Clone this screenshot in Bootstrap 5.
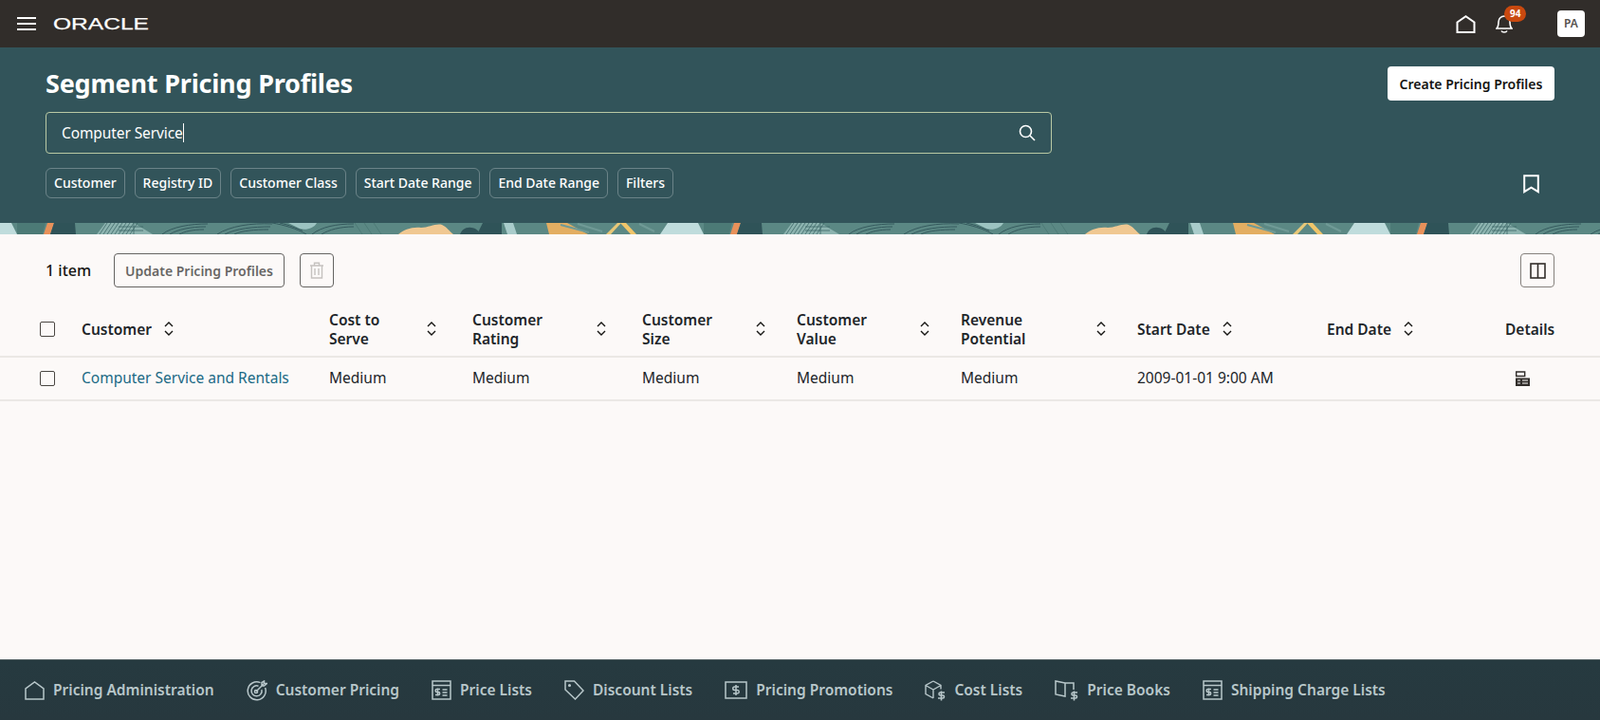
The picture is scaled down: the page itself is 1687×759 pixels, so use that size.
<!DOCTYPE html>
<html lang="en">

<head>
    <meta charset="UTF-8">
    <meta name="viewport" content="width=device-width, initial-scale=1.0">
    <title>Segment Pricing Profiles</title>
    <link href="https://cdn.jsdelivr.net/npm/bootstrap@5.3.0/dist/css/bootstrap.min.css" rel="stylesheet">
    <style>
        body {
            font-family: "Noto Sans", "Liberation Sans", sans-serif;
            background: #fcf9f8;
            color: #161513;
            font-size: 16px;
        }

        .page-wrap {
            height: 759px;
            overflow: hidden;
        }

        /* top bar */
        .top-strip {
            height: 50px;
            background: #312d2a;
            padding: 0 16px 0 18px;
        }

        .logo-svg {
            margin-left: 18px;
        }

        .bell-wrap {
            margin-left: 21px;
            margin-right: 47px;
            height: 20px;
        }

        .bell-count {
            top: -9px;
            left: 9px;
            background: #c9490f;
            font-size: 10px;
            font-weight: 700;
            padding: 3px 6px;
            line-height: 11px;
        }

        .user-box {
            width: 29px;
            height: 28px;
            background: #fff;
            border-radius: 4px;
            color: #55514d;
            font-size: 12px;
            font-weight: 600;
        }

        /* teal header */
        .hero {
            height: 185px;
            background: #32545a;
            color: #fff;
            padding: 18px 48px 0 48px;
        }

        .hero h1 {
            font-size: 27px;
            font-weight: 700;
            line-height: 40px;
            letter-spacing: -0.2px;
            margin: 0;
        }

        .btn-create {
            background: #fff;
            color: #161513;
            font-size: 14px;
            font-weight: 600;
            height: 36px;
            width: 176px;
            padding: 0;
            border-radius: 4px;
            border: 0;
        }

        .search-box {
            width: 1061px;
            height: 44px;
            margin-top: 10px;
            padding: 0 16px;
            border: 1px solid #b9c9a4;
            border-radius: 4px;
            font-size: 15.5px;
        }

        .caret-line {
            border-right: 1px solid #fff;
            height: 20px;
            line-height: 20px;
            letter-spacing: -0.1px;
        }

        .chip-row {
            margin-top: 15px;
            gap: 10px;
        }

        .filter-chip {
            height: 32px;
            line-height: 30px;
            padding: 0 8px;
            font-size: 14px;
            font-weight: 500;
            color: #fff;
            border: 1px solid rgba(255, 255, 255, 0.28);
            border-radius: 6px;
        }

        .deco-band {
            display: block;
            flex: none;
            height: 12px;
        }

        /* toolbar */
        .tool-row {
            padding: 20px 48px 15px 48px;
        }

        .item-count {
            width: 72px;
            font-weight: 500;
        }

        .btn-off {
            height: 36px;
            padding: 0;
            width: 180px;
            font-size: 14px;
            font-weight: 600;
            color: #a9a5a1;
            border: 1px solid #d8d4d0;
            border-radius: 4px;
            background: transparent;
        }

        .btn-square {
            width: 36px;
            height: 36px;
            padding: 0;
            margin-left: 16px;
            border: 1px solid #d8d4d0;
            border-radius: 4px;
            background: transparent;
        }

        .btn-square.btn-dark-edge {
            border-color: #85817d;
            margin-left: 0;
        }

        /* table */
        .price-table {
            table-layout: fixed;
            width: 1687px;
            margin: 0;
            --bs-table-bg: transparent;
        }

        .price-table th,
        .price-table td {
            padding: 0;
            vertical-align: middle;
            font-size: 15.5px;
            border-bottom: 2px solid #ebe8e5;
        }

        .price-table th {
            height: 58px;
            line-height: 20px;
            font-weight: 600;
        }

        .price-table td {
            height: 46px;
            font-weight: 400;
        }

        .price-table .form-check-input {
            width: 16px;
            height: 16px;
            margin: 0 0 0 42px;
            display: block;
            background-color: transparent;
            border: 1.5px solid #4a4642;
            border-radius: 2px;
        }

        .c-check { width: 86px; }
        .c-cust { width: 261px; }
        .c-cost { width: 151px; }
        .c-rate { width: 179px; }
        .c-size { width: 163px; }
        .c-value { width: 173px; }
        .c-rev { width: 186px; }
        .c-start { width: 200px; }
        .c-end { width: 188px; }
        .c-det { width: 100px; }

        .head-cell {
            gap: 13px;
        }

        .lbl-cost { width: 90px; }
        .lbl-rate { width: 118px; }
        .lbl-size { width: 107px; }
        .lbl-value { width: 117px; }
        .lbl-rev { width: 130px; }

        .row-link {
            color: #1b6a85;
            text-decoration: none;
        }

        .details-icon {
            display: block;
            margin-left: 10px;
        }

        .flex-spacer {
            flex: 1 1 auto;
        }

        /* bottom nav */
        .bottom-nav {
            height: 64px;
            flex: none;
            background: linear-gradient(#263a40, #27383e);
            padding-left: 26px;
            gap: 34px;
            border-top: 1px solid #4c5a5e;
        }

        .bottom-nav a {
            color: #b8c7ca;
            font-size: 15.5px;
            font-weight: 600;
            text-decoration: none;
            gap: 9px;
            white-space: nowrap;
        }
    </style>
</head>

<body>
    <div class="page-wrap d-flex flex-column">

        <!-- top bar -->
        <nav class="top-strip d-flex align-items-center flex-none">
            <svg width="20" height="14" viewBox="0 0 20 14" stroke="#fff" stroke-width="2"><path d="M0 1h20M0 7h20M0 13h20"/></svg>
            <svg class="logo-svg" width="101" height="14" viewBox="0 0 101 14">
                <text x="0" y="13" font-family="Liberation Sans, sans-serif" font-size="17" fill="#fff" stroke="#fff" stroke-width=".25" textLength="101" lengthAdjust="spacingAndGlyphs">ORACLE</text>
            </svg>
            <div class="ms-auto d-flex align-items-center">
                <svg width="21" height="19" viewBox="0 0 21 19" fill="none" stroke="#fff" stroke-width="2"><path d="M1.5 18V7.5L10.5 1.3l9 6.2V18z"/></svg>
                <div class="bell-wrap position-relative">
                    <svg class="d-block" width="18" height="20" viewBox="0 0 18 20" fill="none" stroke="#fff" stroke-width="1.6"><path d="M1 15c2-2 2-4 2-7a6 6 0 0 1 12 0c0 3 0 5 2 7z"/><path d="M6 17.5c1 2 5 2 6 0"/></svg>
                    <span class="badge rounded-pill position-absolute bell-count">94</span>
                </div>
                <div class="user-box d-flex align-items-center justify-content-center">PA</div>
            </div>
        </nav>

        <!-- title and search -->
        <header class="hero flex-none">
            <div class="d-flex justify-content-between align-items-center">
                <h1>Segment Pricing Profiles</h1>
                <button type="button" class="btn btn-create">Create Pricing Profiles</button>
            </div>
            <div class="search-box d-flex align-items-center justify-content-between">
                <span class="caret-line">Computer Service</span>
                <svg width="18" height="18" viewBox="0 0 18 18" fill="none" stroke="#fff" stroke-width="1.6"><circle cx="7.5" cy="7.5" r="6"/><path d="M12 12l5 5"/></svg>
            </div>
            <div class="d-flex align-items-center justify-content-between">
                <div class="chip-row d-flex">
                    <span class="filter-chip">Customer</span>
                    <span class="filter-chip">Registry ID</span>
                    <span class="filter-chip">Customer Class</span>
                    <span class="filter-chip">Start Date Range</span>
                    <span class="filter-chip">End Date Range</span>
                    <span class="filter-chip">Filters</span>
                </div>
                <svg class="me-3 mt-3" width="17" height="20" viewBox="0 0 17 20" fill="none" stroke="#fff" stroke-width="2"><path d="M1.2 1.2h14.6v17l-7.3-4.6-7.3 4.6z"/></svg>
            </div>
        </header>

        <!-- decorative band -->
        <svg class="deco-band" width="1687" height="12" xmlns="http://www.w3.org/2000/svg">
            <defs>
                <pattern id="bandTile" width="724" height="12" patternUnits="userSpaceOnUse" x="-1">
                    <rect width="724" height="12" fill="#5b8884"/>
                    <!-- left pale + orange + dark block -->
                    <path d="M0 0h13l6 12H0z" fill="#bfdcdc"/>
                    <path d="M19 0h30l-3 12H19z" fill="#4c7a76"/>
                    <path d="M51 0h7l-4 12h-7z" fill="#e8915a"/>
                    <path d="M58 0h22l1 12H54z" fill="#2f5358"/>
                    <!-- hatching -->
                    <path d="M103 12l9-12h30l20 12z" fill="#8cb3af"/>
                    <path d="M106 12l8-12M110 12l8-12M114 12l8-12M118 12l8-12M122 12l8-12M126 12l8-12M130 12l8-12M134 12l8-12M138 12l8-12M142 0v12M126 4h26M126 8h26" stroke="#3c6766" stroke-width=".8" fill="none"/>
                    <!-- arcs -->
                    <path d="M172 12c10-8 30-11 48-11M180 12c8-5 22-8 38-8M190 12c6-3 14-5 26-5M230 12c14-9 36-12 58-11M238 12c12-6 30-8 48-8M248 12c8-4 22-5 36-5M288 0c12 2 26 6 36 12M296 0c10 2 18 6 24 8M330 12c10-8 26-11 44-11M340 12c8-5 20-8 34-8" stroke="#2f5358" stroke-width=".9" fill="none"/>
                    <path d="M305 0h30c-3 6-12 8-18 6z" fill="#9cc3c1"/>
                    <path d="M375 0l8 12M385 0l8 12M395 0l8 12" stroke="#4c7a76" stroke-width="1" fill="none"/>
                    <!-- peach blob -->
                    <path d="M421 12c6-5 14-8 24-7 8 0 16-5 22-3 5 2 8 7 12 10z" fill="#f0c892"/>
                    <path d="M486 12c2-5 6-8 12-7 5 0 8 4 10 7z" fill="#2f5358"/>
                    <path d="M514 12l3-12h-7l-6 12z" fill="#2f5358"/>
                    <path d="M514 0h16v12h-16z" fill="#2f5358"/>
                    <path d="M532 0h10l4 12h-10z" fill="#a9cccb"/>
                    <path d="M577 0h22l22 12h-41z" fill="#e3ae62"/>
                    <path d="M640 12l12-12h4l-11 12z" fill="#e8c878"/>
                    <path d="M655 0h6l11 12h-6z" fill="#f0c56a"/>
                    <path d="M697 12l8-12h29l5 12z" fill="#bfdcdc"/>
                    <path d="M592 2l30 8M610 1l26 8M675 1l16 8" stroke="#6f9a96" stroke-width="2" fill="none"/>
                </pattern>
            </defs>
            <rect width="1687" height="12" fill="url(#bandTile)"/>
        </svg>

        <!-- toolbar -->
        <div class="tool-row d-flex align-items-center flex-none">
            <span class="item-count">1 item</span>
            <button type="button" class="btn btn-off" disabled>Update Pricing Profiles</button>
            <button type="button" class="btn btn-square d-flex align-items-center justify-content-center" disabled>
                <svg width="16" height="18" viewBox="0 0 16 18" fill="none" stroke="#a9a5a1" stroke-width="1.4"><path d="M1 4h14M5.5 4V1.2h5V4M2.5 4v13h11V4M6 7v7M10 7v7"/></svg>
            </button>
            <div class="flex-spacer"></div>
            <button type="button" class="btn btn-square btn-dark-edge d-flex align-items-center justify-content-center">
                <svg width="17" height="17" viewBox="0 0 17 17" fill="none" stroke="#312d2a" stroke-width="1.6"><rect x="1" y="1" width="15" height="15"/><path d="M8.5 1v15"/></svg>
            </button>
        </div>

        <!-- results -->
        <table class="table price-table flex-none">
            <colgroup>
                <col class="c-check"><col class="c-cust"><col class="c-cost"><col class="c-rate"><col class="c-size"><col class="c-value"><col class="c-rev"><col class="c-start"><col class="c-end"><col class="c-det">
            </colgroup>
            <thead>
                <tr>
                    <th><input class="form-check-input" type="checkbox"></th>
                    <th><div class="head-cell d-flex align-items-center"><span>Customer</span>
                        <svg width="10" height="15" viewBox="0 0 10 15" fill="none" stroke="#161513" stroke-width="1.4"><path d="M1 5l4-4 4 4M1 10l4 4 4-4"/></svg></div></th>
                    <th><div class="head-cell d-flex align-items-center"><span class="lbl-cost">Cost to<br>Serve</span>
                        <svg width="10" height="15" viewBox="0 0 10 15" fill="none" stroke="#161513" stroke-width="1.4"><path d="M1 5l4-4 4 4M1 10l4 4 4-4"/></svg></div></th>
                    <th><div class="head-cell d-flex align-items-center"><span class="lbl-rate">Customer<br>Rating</span>
                        <svg width="10" height="15" viewBox="0 0 10 15" fill="none" stroke="#161513" stroke-width="1.4"><path d="M1 5l4-4 4 4M1 10l4 4 4-4"/></svg></div></th>
                    <th><div class="head-cell d-flex align-items-center"><span class="lbl-size">Customer<br>Size</span>
                        <svg width="10" height="15" viewBox="0 0 10 15" fill="none" stroke="#161513" stroke-width="1.4"><path d="M1 5l4-4 4 4M1 10l4 4 4-4"/></svg></div></th>
                    <th><div class="head-cell d-flex align-items-center"><span class="lbl-value">Customer<br>Value</span>
                        <svg width="10" height="15" viewBox="0 0 10 15" fill="none" stroke="#161513" stroke-width="1.4"><path d="M1 5l4-4 4 4M1 10l4 4 4-4"/></svg></div></th>
                    <th><div class="head-cell d-flex align-items-center"><span class="lbl-rev">Revenue<br>Potential</span>
                        <svg width="10" height="15" viewBox="0 0 10 15" fill="none" stroke="#161513" stroke-width="1.4"><path d="M1 5l4-4 4 4M1 10l4 4 4-4"/></svg></div></th>
                    <th><div class="head-cell d-flex align-items-center"><span>Start Date</span>
                        <svg width="10" height="15" viewBox="0 0 10 15" fill="none" stroke="#161513" stroke-width="1.4"><path d="M1 5l4-4 4 4M1 10l4 4 4-4"/></svg></div></th>
                    <th><div class="head-cell d-flex align-items-center"><span>End Date</span>
                        <svg width="10" height="15" viewBox="0 0 10 15" fill="none" stroke="#161513" stroke-width="1.4"><path d="M1 5l4-4 4 4M1 10l4 4 4-4"/></svg></div></th>
                    <th>Details</th>
                </tr>
            </thead>
            <tbody>
                <tr>
                    <td><input class="form-check-input" type="checkbox"></td>
                    <td><a class="row-link" href="#">Computer Service and Rentals</a></td>
                    <td>Medium</td>
                    <td>Medium</td>
                    <td>Medium</td>
                    <td>Medium</td>
                    <td>Medium</td>
                    <td>2009-01-01 9:00 AM</td>
                    <td></td>
                    <td>
                        <svg class="details-icon" width="17" height="17" viewBox="0 0 17 17"><path d="M1.7 1h9v4.5h-9z" fill="none" stroke="#312d2a" stroke-width="1.4"/><path d="M1 7.5h15V16H1z" fill="#312d2a"/><path d="M3 10h3M8 10h6M3 13h3M8 13h6" stroke="#fcf9f8" stroke-width="1.2"/></svg>
                    </td>
                </tr>
            </tbody>
        </table>

        <div class="flex-spacer"></div>

        <!-- bottom navigation -->
        <footer class="bottom-nav d-flex align-items-center">
            <a href="#" class="d-flex align-items-center">
                <svg width="21" height="20" viewBox="0 0 21 20" fill="none" stroke="#b8c7ca" stroke-width="1.5"><path d="M1 19V8L10.5 1 20 8v11z"/></svg>
                Pricing Administration</a>
            <a href="#" class="d-flex align-items-center">
                <svg width="22" height="22" viewBox="0 0 22 22" fill="none" stroke="#b8c7ca" stroke-width="1.5"><path d="M14.5 2.6A9.5 9.5 0 1 0 19.6 8"/><path d="M12.5 6.2A5.5 5.5 0 1 0 15.9 10"/><circle cx="10" cy="12" r="1.6"/><path d="M10 12l8-8M16 6V2.5l2.5-1.5V3.5H21.5L18.5 6z"/></svg>
                Customer Pricing</a>
            <a href="#" class="d-flex align-items-center">
                <svg width="21" height="21" viewBox="0 0 21 21" fill="none" stroke="#b8c7ca" stroke-width="1.5"><rect x="1" y="1" width="19" height="19"/><path d="M1 5.5h19"/><path d="M9 9.5H5.6a1.4 1.4 0 0 0 0 3h1.6a1.4 1.4 0 0 1 0 3H4M6.5 8.5v8M11.5 10h5M11.5 13h5M11.5 16h5"/></svg>
                Price Lists</a>
            <a href="#" class="d-flex align-items-center">
                <svg width="21" height="21" viewBox="0 0 21 21" fill="none" stroke="#b8c7ca" stroke-width="1.5"><path d="M1 1h9.5L20 11l-8.5 9L1 10z"/><circle cx="5.5" cy="5.5" r=".8"/></svg>
                Discount Lists</a>
            <a href="#" class="d-flex align-items-center">
                <svg width="24" height="19" viewBox="0 0 24 19" fill="none" stroke="#b8c7ca" stroke-width="1.5"><rect x="1" y="1" width="22" height="17"/><path d="M15 6h-4.5a1.7 1.7 0 0 0 0 3.5h3a1.7 1.7 0 0 1 0 3.5H9M12 4v11"/></svg>
                Pricing Promotions</a>
            <a href="#" class="d-flex align-items-center">
                <svg width="22" height="22" viewBox="0 0 22 22" fill="none" stroke="#b8c7ca" stroke-width="1.4"><path d="M9 1l8 4.5v4M9 1L1 5.5v9L9 19M1 5.5l8 4.5 8-4.5M9 10v9"/><path d="M21 13h-4.5a1.5 1.5 0 0 0 0 3h2.500a1.500 1.500 0 0 1 0 3H14M17.500 11.500v10" stroke-width="1.6"/></svg>
                Cost Lists</a>
            <a href="#" class="d-flex align-items-center">
                <svg width="25" height="22" viewBox="0 0 25 22" fill="none" stroke="#b8c7ca" stroke-width="1.5"><path d="M11 3L1 1v14l10 2zM11 3h9v7"/><path d="M24 13h-4.500a1.500 1.500 0 0 0 0 3h2.500a1.500 1.500 0 0 1 0 3H17M20.500 11.500v10" stroke-width="1.6"/></svg>
                Price Books</a>
            <a href="#" class="d-flex align-items-center">
                <svg width="21" height="21" viewBox="0 0 21 21" fill="none" stroke="#b8c7ca" stroke-width="1.5"><rect x="1" y="1" width="19" height="19"/><path d="M1 5.5h19"/><path d="M9 9.5H5.600a1.400 1.400 0 0 0 0 3h1.600a1.400 1.400 0 0 1 0 3H4M6.500 8.500v8M11.500 10h5M11.500 13h5M11.500 16h5"/></svg>
                Shipping Charge Lists</a>
        </footer>
    </div>

    <script src="https://cdn.jsdelivr.net/npm/bootstrap@5.3.0/dist/js/bootstrap.bundle.min.js"></script>
</body>

</html>
